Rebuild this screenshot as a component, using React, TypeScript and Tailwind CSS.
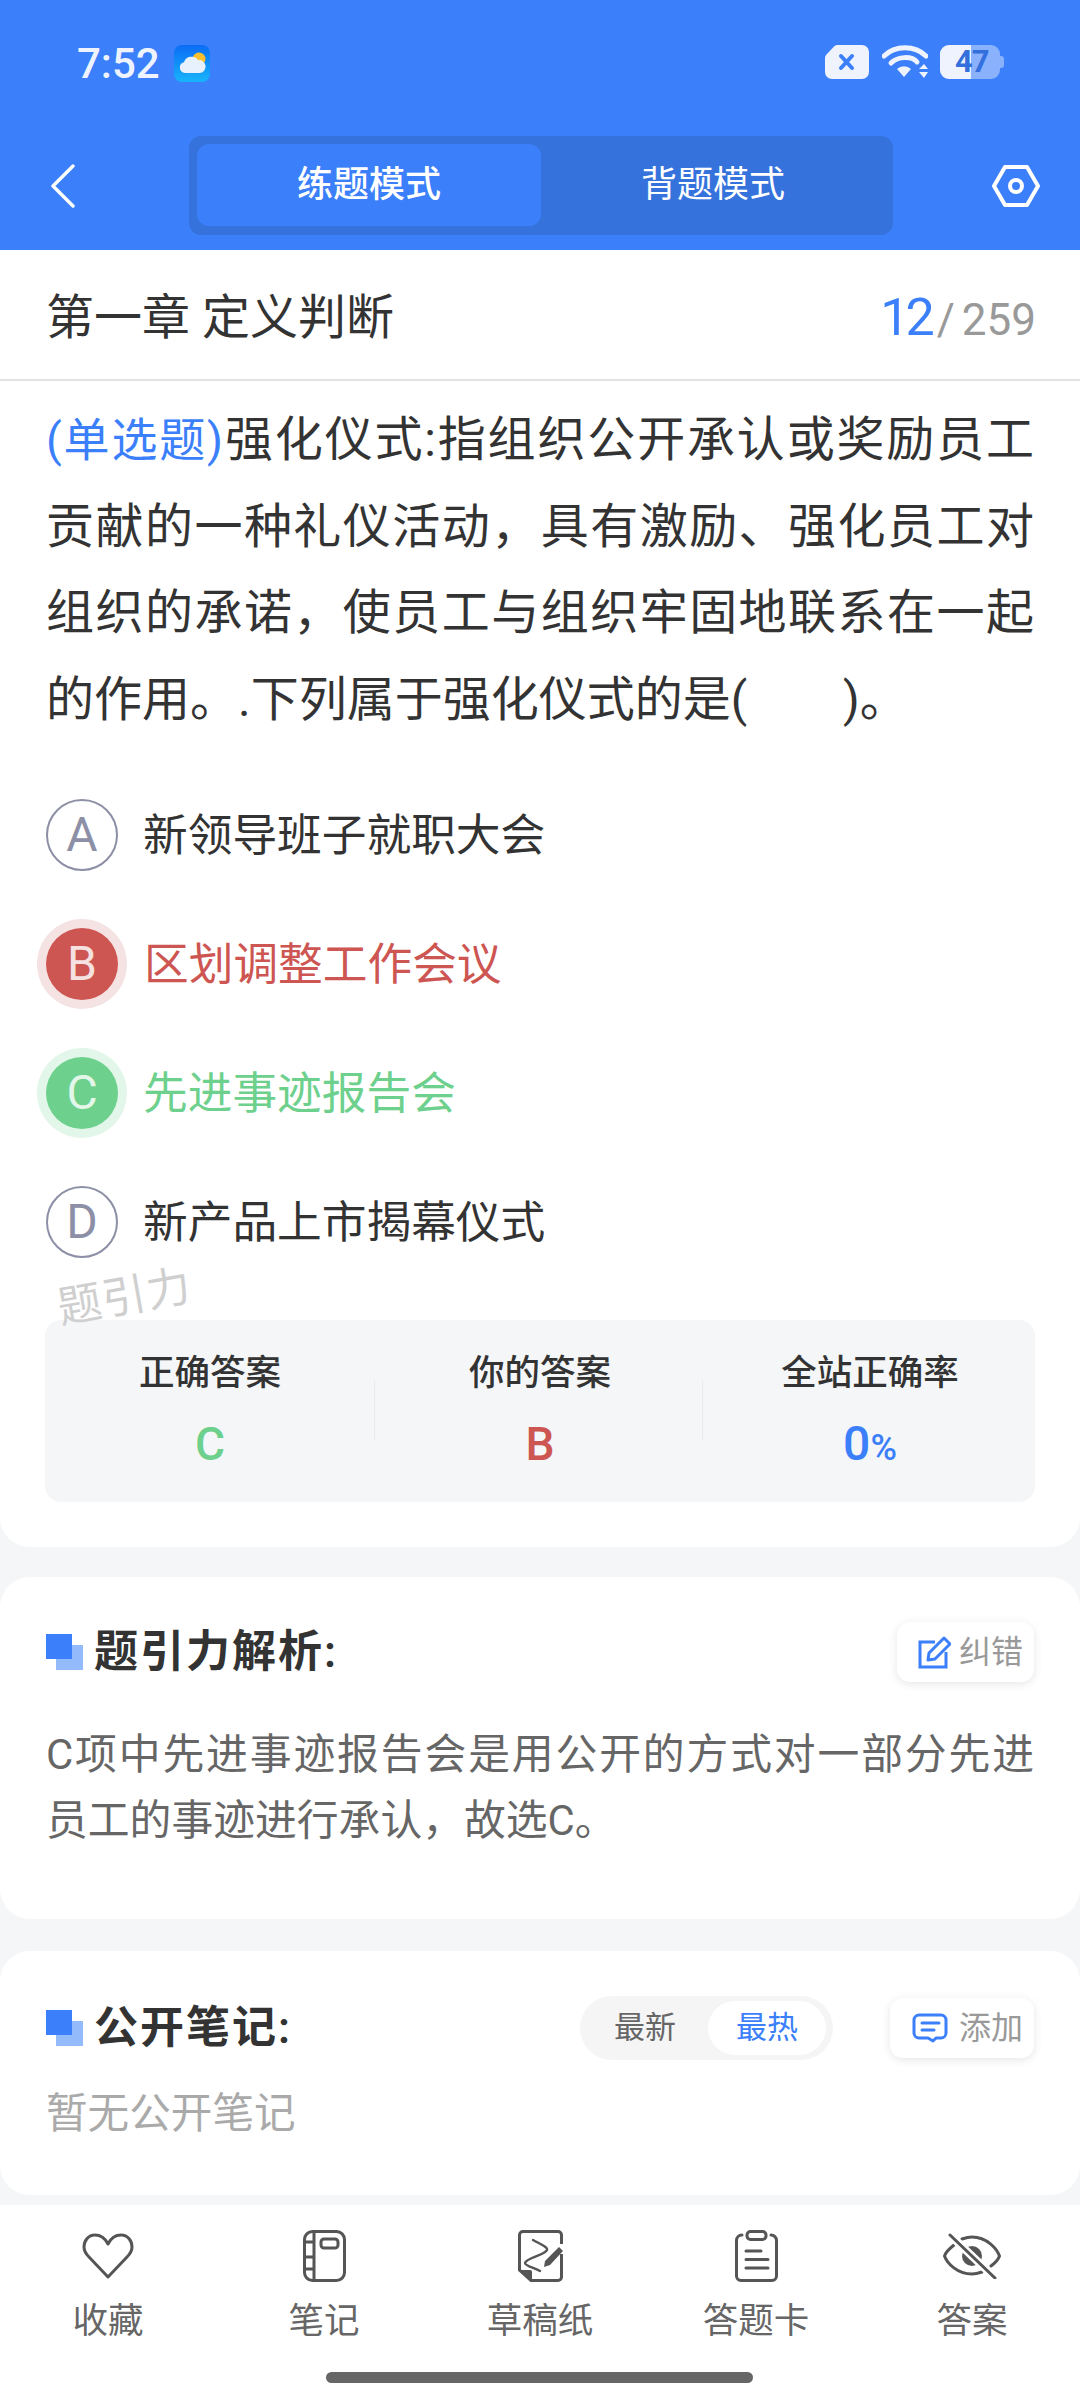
const options = [
  { key: "A", text: "新领导班子就职大会", state: "idle" },
  { key: "B", text: "区划调整工作会议", state: "wrong" },
  { key: "C", text: "先进事迹报告会", state: "right" },
  { key: "D", text: "新产品上市揭幕仪式", state: "idle" },
];

function StatusIcons() {
  return (
    <div className="flex items-center">
      <svg width="44" height="34" viewBox="0 0 44 34" className="mr-[13px]">
        <path d="M12 0H37a7 7 0 0 1 7 7V27a7 7 0 0 1-7 7H7a7 7 0 0 1-7-7V13a5 5 0 0 1 1.5-3.5L9 1.5A5 5 0 0 1 12 0Z" fill="#eef3fe" />
        <path d="M16 11l11 12M27 11L16 23" stroke="#3b7ffa" strokeWidth="4" strokeLinecap="round" />
      </svg>
      <svg width="46" height="34" viewBox="0 0 46 34" className="mr-[12px]">
        <path d="M2 11C13 0 33 0 44 11" stroke="#eef3fe" strokeWidth="5" fill="none" strokeLinecap="round" />
        <path d="M9 18C16 11 30 11 35 17" stroke="#eef3fe" strokeWidth="5" fill="none" strokeLinecap="round" />
        <path d="M15 24a10 10 0 0 1 14 0l-7 8Z" fill="#eef3fe" />
        <path d="M37 24l5-5 4 5ZM37 27l9 0-4 6Z" fill="#eef3fe" />
      </svg>
      <div className="relative h-[34px] w-[64px]">
        <div className="absolute inset-y-0 left-0 w-[60px] rounded-[9px] bg-[#8ab2fc]" />
        <div className="absolute inset-y-0 left-0 w-[31px] rounded-l-[9px] bg-[#eef3fe]" />
        <div className="absolute right-0 top-[11px] h-[12px] w-[4px] rounded-r-[3px] bg-[#8ab2fc]" />
        <span className="absolute left-[15px] top-0 text-[31px] font-bold leading-[34px] tracking-[-1px] text-[#3470dc]">47</span>
      </div>
    </div>
  );
}

function WeatherIcon() {
  return (
    <svg width="36" height="37" viewBox="0 0 36 37" className="ml-[14px]">
      <defs>
        <linearGradient id="sky" x1="0" y1="0" x2="0" y2="1">
          <stop offset="0" stopColor="#0a6cf5" />
          <stop offset="1" stopColor="#18b4fb" />
        </linearGradient>
      </defs>
      <rect width="36" height="37" rx="8" fill="url(#sky)" />
      <circle cx="25" cy="14" r="6.5" fill="#fbc02d" />
      <path d="M11 28a5.5 5.5 0 0 1-1-10.8A8 8 0 0 1 24 15a6.5 6.5 0 0 1 2 13Z" fill="#e6f1fd" />
    </svg>
  );
}

function SectionMark() {
  return (
    <div className="relative mr-[11px] h-[36px] w-[37px] shrink-0">
      <div className="absolute bottom-0 right-0 h-[25px] w-[27px] bg-[#93bbfc]" />
      <div className="absolute left-0 top-0 h-[25px] w-[26px] bg-[#3b7ffa]" />
    </div>
  );
}

function NavIcon({ name }: { name: string }) {
  if (name === "heart") {
    return (
      <svg width="52" height="46" viewBox="0 0 52 46" fill="none" stroke="#555" strokeWidth="3" strokeLinejoin="round">
        <path d="M26 11C23 5 18 2 13 2C6 2 2 8 2 14C2 18 4 21 7 24L26 44L45 24C48 21 50 18 50 14C50 8 46 2 39 2C34 2 29 5 26 11Z" />
      </svg>
    );
  }
  if (name === "note") {
    return (
      <svg width="43" height="52" viewBox="0 0 43 52" fill="none" stroke="#555" strokeWidth="3">
        <rect x="1.5" y="1.5" width="40" height="49" rx="8" />
        <path d="M11 2V50M2 12H11M2 27H11M2 39H11" />
        <rect x="18" y="9" width="17" height="9" rx="3" />
      </svg>
    );
  }
  if (name === "draft") {
    return (
      <svg width="45" height="52" viewBox="0 0 45 52" fill="none" stroke="#555" strokeWidth="3">
        <path d="M43.5 14V5a3.5 3.5 0 0 0-3.5-3.5H5A3.5 3.5 0 0 0 1.5 5V40L13 50.5H40a3.5 3.5 0 0 0 3.5-3.5V24" />
        <path d="M2 40H12a2 2 0 0 1 2 2V50Z" fill="#555" stroke="none" />
        <path d="M15 10C22 14 30 17 29 20C27 25 8 28 7 33C7 36 17 38 22 41" strokeWidth="2.4" strokeLinecap="round" />
        <path d="M41 17L45 21L32 35L26 37L27 31Z" fill="#555" stroke="none" />
      </svg>
    );
  }
  if (name === "card") {
    return (
      <svg width="43" height="52" viewBox="0 0 43 52" fill="none" stroke="#555" strokeWidth="3" strokeLinecap="round">
        <path d="M7 5A5.5 5.5 0 0 0 1.5 10.5V46A4.5 4.5 0 0 0 6 50.5H37A4.5 4.5 0 0 0 41.500 46V10.500A5.500 5.500 0 0 0 36 5" />
        <rect x="12" y="1.5" width="19" height="8" rx="3.5" />
        <path d="M11 21H26M11 29.500H33M11 38H33" strokeWidth="3" />
      </svg>
    );
  }
  return (
    <svg width="58" height="46" viewBox="0 0 58 46" fill="none" stroke="#555" strokeWidth="3" strokeLinecap="round">
      <path d="M11 12C6 16 2 21 1.500 23C4 30 14 41 29 41C33 41 36 40 39 39" />
      <path d="M19 6C22 5 26 4 29 4C44 4 54 16 56.500 23C55.500 26 52 30 48 33" />
      <circle cx="29" cy="23" r="10" fill="#555" stroke="none" />
      <path d="M7 2L52 45" stroke="white" strokeWidth="8" strokeLinecap="butt" />
      <path d="M7 2L52 45" />
    </svg>
  );
}

export default function App() {
  const fontStack = "font-['Roboto','Noto_Sans_CJK_SC',sans-serif]";
  return (
    <div className={`flex h-[2400px] w-[1080px] flex-col overflow-hidden bg-[#f4f6f8] ${fontStack}`}>
      {/* header */}
      <header className="h-[250px] bg-[#3b7ffa]">
        <div className="flex h-[136px] items-start justify-between pl-[77px] pr-[76px] pt-[45px]">
          <div className="flex items-center">
            <span className="text-[42px] font-medium leading-[37px] text-[#eef3fe]">7:52</span>
            <WeatherIcon />
          </div>
          <StatusIcons />
        </div>
        <div className="flex items-center pl-[50px] pr-[40px]">
          <svg width="26" height="44" viewBox="0 0 26 44" fill="none" stroke="white" strokeWidth="3.4" strokeLinecap="round" strokeLinejoin="round">
            <path d="M23 2L3 22L23 42" />
          </svg>
          <div className="ml-[113px] flex h-[99px] w-[704px] rounded-[12px] bg-[#3672dc] p-[8px_8px_9px]">
            <div className="flex w-[344px] items-center justify-center rounded-[12px] bg-[#3b7ffa] text-[36px] font-medium text-white">练题模式</div>
            <div className="flex flex-1 items-center justify-center text-[36px] text-white">背题模式</div>
          </div>
          <svg width="48" height="44" viewBox="0 0 48 44" fill="none" stroke="white" strokeWidth="4" strokeLinejoin="round" className="ml-auto">
            <path d="M13 3H35L46 22L35 41H13L2 22Z" />
            <circle cx="24" cy="22" r="6" />
          </svg>
        </div>
      </header>

      {/* question card */}
      <section className="h-[1297px] rounded-b-[30px] bg-white">
        <div className="flex h-[131px] items-center justify-between border-b-2 border-[#e2e2e2] pl-[46px] pr-[44px] pt-[6px]">
          <span className="text-[48px] leading-none text-[#333]">第一章 定义判断</span>
          <span className="flex items-baseline text-[44px] text-[#999]">
            <span className="mr-[6px] text-[52px] tracking-[-4px] text-[#3b7ffa]">12</span>
            <span>/</span>
            <span className="ml-[7px]">259</span>
          </span>
        </div>
        <p className="mt-[16px] px-[46px] text-justify text-[48px] leading-[86.6px] text-[#333]">
          <span className="text-[46px] text-[#3b7ffa]">(单选题)</span>
          <span>强化仪式:指组织公开承认或奖励员工贡献的一种礼仪活动，具有激励、强化员工对组织的承诺，使员工与组织牢固地联系在一起的作用。.下列属于强化仪式的是(　　)。</span>
        </p>
        <div className="mt-[56px] flex flex-col gap-[57px] px-[46px]">
          {options.map((o) => (
            <div key={o.key} className="flex h-[72px] items-center">
              {o.state === "idle" && (
                <div className="flex h-[72px] w-[72px] items-center justify-center rounded-full border-2 border-[#8c8fa5] text-[48px] text-[#8c8fa5]">{o.key}</div>
              )}
              {o.state === "wrong" && (
                <div className="flex h-[72px] w-[72px] items-center justify-center rounded-full bg-[#cd5552] text-[48px] text-[#f6e1e1] shadow-[0_0_0_9px_#f5e2e2]">{o.key}</div>
              )}
              {o.state === "right" && (
                <div className="flex h-[72px] w-[72px] items-center justify-center rounded-full bg-[#6dd08c] text-[48px] text-[#e2f6e9] shadow-[0_0_0_9px_#e2f6e9]">{o.key}</div>
              )}
              <span
                className={
                  o.state === "wrong"
                    ? "ml-[26px] pt-[2px] text-[44.7px] text-[#cd5552]"
                    : o.state === "right"
                      ? "ml-[25px] pt-[2px] text-[44.7px] text-[#6dd08c]"
                      : "ml-[25px] pt-[2px] text-[44.7px] text-[#333]"
                }
              >
                {o.text}
              </span>
            </div>
          ))}
        </div>
        <div className="relative mx-[45px] mt-[62px] h-[182px] rounded-[16px] bg-[#f4f6f8]">
          <span className="absolute -top-[56px] left-[12px] -rotate-[10deg] text-[44px] tracking-[1px] text-[#cfcfcf]">题引力</span>
          <div className="grid h-full grid-cols-3 pt-[28px] text-center">
            <div>
              <div className="text-[35.5px] font-medium leading-[50px] text-[#333]">正确答案</div>
              <div className="mt-[21px] text-[46px] font-medium leading-[50px] text-[#6dd08c]">C</div>
            </div>
            <div>
              <div className="text-[35.5px] font-medium leading-[50px] text-[#333]">你的答案</div>
              <div className="mt-[21px] text-[46px] font-medium leading-[50px] text-[#cd5552]">B</div>
            </div>
            <div>
              <div className="text-[35.5px] font-medium leading-[50px] text-[#333]">全站正确率</div>
              <div className="mt-[21px] text-[48px] font-medium leading-[50px] text-[#3b7ffa]">
                0<span className="text-[36px]">%</span>
              </div>
            </div>
          </div>
          <div className="absolute left-[329px] top-[60px] h-[60px] w-[1px] bg-[#e8eaed]" />
          <div className="absolute left-[657px] top-[60px] h-[60px] w-[1px] bg-[#e8eaed]" />
        </div>
      </section>

      {/* analysis */}
      <section className="mt-[30px] h-[342px] rounded-[30px] bg-white px-[46px] pt-[45px]">
        <div className="flex h-[60px] items-center justify-between">
          <div className="flex items-center">
            <SectionMark />
            <span className="text-[44px] font-semibold tracking-[2px] text-[#333]">题引力解析:</span>
          </div>
          <div className="flex h-[60px] w-[137px] items-center rounded-[13px] bg-white pl-[21px] shadow-[0_2px_10px_rgba(0,0,0,0.1)]">
            <svg width="33" height="33" viewBox="0 0 33 33" fill="none" stroke="#3b7ffa" strokeWidth="3" className="mr-[8px]">
              <path d="M17 6H2V31H28V16" />
              <path d="M26 2L32 8L17 23L10 24L11 17Z" strokeLinejoin="round" />
            </svg>
            <span className="text-[32px] text-[#999]">纠错</span>
          </div>
        </div>
        <p className="mt-[40px] text-justify text-[41.8px] leading-[66px] text-[#666]">C项中先进事迹报告会是用公开的方式对一部分先进员工的事迹进行承认，故选C。</p>
      </section>

      {/* notes */}
      <section className="mt-[32px] h-[244px] rounded-[30px] bg-white px-[46px] pt-[45px]">
        <div className="flex h-[64px] items-center">
          <SectionMark />
          <span className="text-[44px] font-semibold tracking-[2px] text-[#333]">公开笔记:</span>
          <div className="ml-auto flex h-[64px] w-[253px] items-center rounded-full bg-[#f5f5f5] pl-[34px] pr-[7px] text-[31px]">
            <span className="text-[#666]">最新</span>
            <span className="ml-[32px] flex h-[54px] w-[118px] items-center justify-center rounded-full bg-white text-[#3b7ffa]">最热</span>
          </div>
          <div className="ml-[57px] flex h-[60px] w-[144px] items-center rounded-[13px] bg-white pl-[22px] shadow-[0_2px_10px_rgba(0,0,0,0.1)]">
            <svg width="36" height="30" viewBox="0 0 36 30" fill="none" stroke="#3b7ffa" strokeWidth="3" className="mr-[11px]">
              <path d="M7 2H29a5 5 0 0 1 5 5V20a5 5 0 0 1-5 5H24L21 28L16 25H7a5 5 0 0 1-5-5V7a5 5 0 0 1 5-5Z" strokeLinejoin="round" />
              <path d="M10 10H27M10 17H22" strokeLinecap="round" />
            </svg>
            <span className="text-[32px] text-[#999]">添加</span>
          </div>
        </div>
        <p className="mt-[24px] text-[41.6px] leading-[60px] text-[#aaa]">暂无公开笔记</p>
      </section>

      {/* bottom nav */}
      <nav className="relative mt-[10px] flex-1 bg-white">
        <div className="grid grid-cols-5 pt-[24px]">
          {[
            ["heart", "收藏"],
            ["note", "笔记"],
            ["draft", "草稿纸"],
            ["card", "答题卡"],
            ["eye", "答案"],
          ].map(([icon, label]) => (
            <div key={label} className="flex flex-col items-center">
              <div className="flex h-[54px] items-center">
                <NavIcon name={icon} />
              </div>
              <span className="mt-[14px] text-[35.5px] leading-[48px] text-[#666]">{label}</span>
            </div>
          ))}
        </div>
        <div className="absolute bottom-[17px] left-[326px] h-[11px] w-[427px] rounded-full bg-[#666]" />
      </nav>
    </div>
  );
}
